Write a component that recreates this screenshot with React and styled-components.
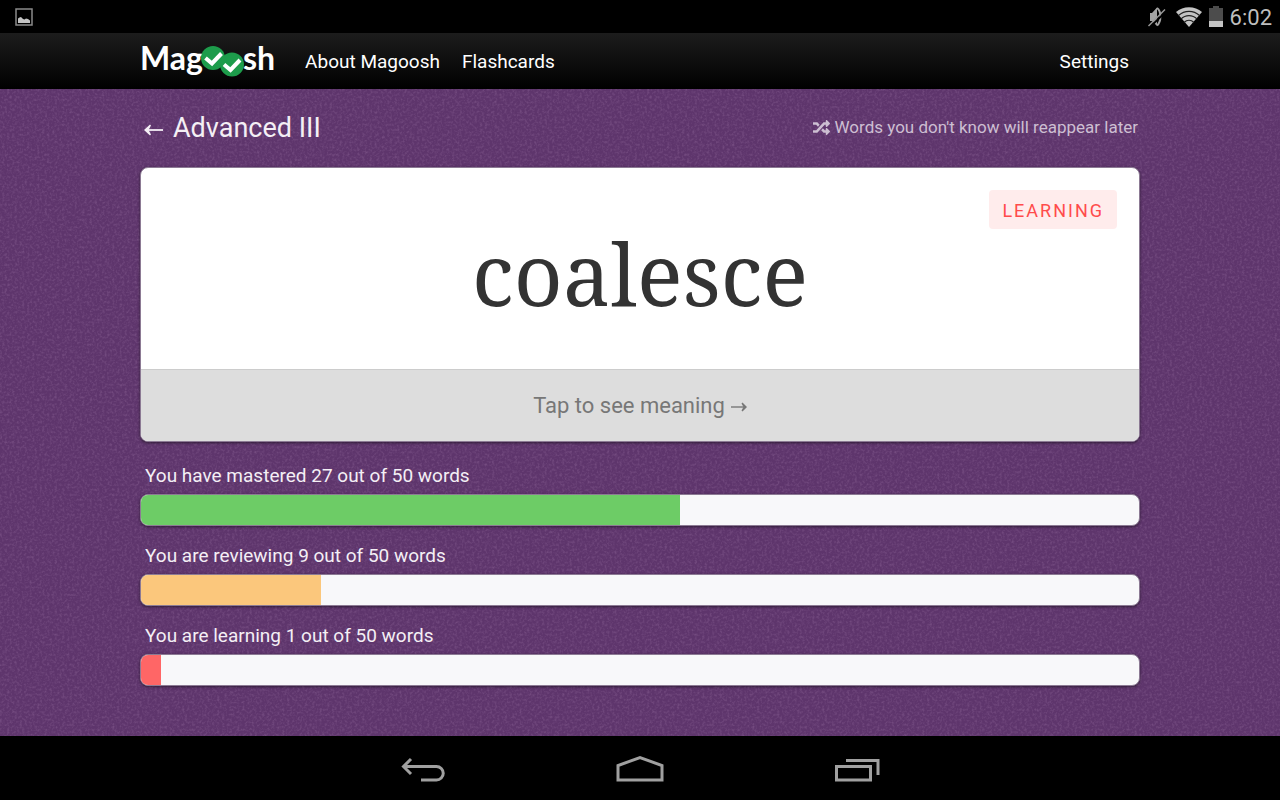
import React from 'react';
import styled, { createGlobalStyle } from 'styled-components';
import { FaRandom } from 'react-icons/fa';

const TOTAL_WORDS = 50;

const PROGRESS = [
  { id: 'mastered', label: 'You have mastered', count: 27, color: '#6dcc66' },
  { id: 'reviewing', label: 'You are reviewing', count: 9, color: '#fbc77c' },
  { id: 'learning', label: 'You are learning', count: 1, color: '#ff6666' },
];

const StatusBar = () => (
  <StatusBarWrapper>
    <svg width='18' height='18' viewBox='0 0 18 18'>
      <rect x='1' y='1' width='16' height='16' fill='none' stroke='#8a8a8a' strokeWidth='1.5' />
      <path d='M3 15V10.500L4.500 9.500L6 9L8 11L9.500 11.500L11 10.500L13 11L15 12.500V15Z' fill='#c4c4c4' />
    </svg>
    <div className='statusRight'>
      <svg width='20' height='22' viewBox='0 0 20 22'>
        <path d='M3 7H5L10 1.500V20L5 15H3Z' fill='#a4a4a4' />
        <path d='M10 2C14.500 5 14.500 16 10 19.500' fill='none' stroke='#a4a4a4' strokeWidth='2' />
        <path d='M2.500 21.500L19.500 5' stroke='#000' strokeWidth='2' />
        <path d='M1.500 20L18 3.500' stroke='#9a9a9a' strokeWidth='1.500' />
      </svg>
      <svg className='wifi' width='26' height='20' viewBox='0 0 26 20'>
        <path d='M13 20L0 5C7 -1.500 19 -1.500 26 5Z' fill='#c4c4c4' />
        <path
          d='M2.500 8.500C8.500 3 17.500 3 23.500 8.500M5 12C9.500 7.500 16.500 7.500 21 12M8 15.500C11 12.500 15 12.500 18 15.500'
          fill='none'
          stroke='#222'
          strokeWidth='1.200'
        />
      </svg>
      <svg className='battery' width='14' height='21' viewBox='0 0 14 21'>
        <path d='M0 2H4V0H10V2H14V21H0Z' fill='#4c4c4c' />
        <rect y='15' width='14' height='6' fill='#c4c4c4' />
      </svg>
      <time>6:02</time>
    </div>
  </StatusBarWrapper>
);

const Logo = () => (
  <LogoLink href='#home' aria-label='Magoosh'>
    <span>Mag</span>
    <svg width='40' height='34' viewBox='0 0 40 34'>
      <circle cx='10' cy='14' r='12' fill='#1d9c4b' />
      <circle cx='29' cy='20.500' r='12' fill='#1d9c4b' />
      <path
        d='M2.500 14L9 19.500L18.500 9.500M21 20.500L27.500 26L37 16'
        fill='none'
        stroke='#fff'
        strokeWidth='4'
      />
    </svg>
    <span>sh</span>
  </LogoLink>
);

const ProgressRow = ({ id, label, count, color }) => (
  <ProgressItem>
    <p id={id}>
      {label} {count} out of {TOTAL_WORDS} words
    </p>
    <Track
      role='progressbar'
      aria-labelledby={id}
      aria-valuenow={count}
      aria-valuemin={0}
      aria-valuemax={TOTAL_WORDS}
    >
      <Fill $color={color} style={{ width: `${(count / TOTAL_WORDS) * 100}%` }} />
    </Track>
  </ProgressItem>
);

const SystemNav = () => (
  <SystemNavWrapper>
    <button aria-label='Back'>
      <svg width='48' height='32' viewBox='0 0 48 32'>
        <path d='M12 4L4.500 11.500L12 19M4.500 11.500H37.500A6.500 6.500 0 0 1 37.500 25H22' />
      </svg>
    </button>
    <button aria-label='Home'>
      <svg width='48' height='32' viewBox='0 0 48 32'>
        <path d='M2 25V10.500L24 2.500L46 10.500V25Z' />
      </svg>
    </button>
    <button aria-label='Recent apps'>
      <svg width='48' height='32' viewBox='0 0 48 32'>
        <path d='M3.500 11.500H37.500V25H3.500ZM13 5.500H45V20' />
      </svg>
    </button>
  </SystemNavWrapper>
);

const App = () => {
  return (
    <Page>
      <GlobalStyle />
      <StatusBar />
      <NavBar>
        <Container className='navInner'>
          <Logo />
          <NavLink href='#about'>About Magoosh</NavLink>
          <NavLink href='#flashcards'>Flashcards</NavLink>
          <NavLink href='#settings' $last>
            Settings
          </NavLink>
        </Container>
      </NavBar>
      <Main>
        <Grain aria-hidden='true'>
          <filter
            id='grain'
            x='0'
            y='0'
            width='100%'
            height='100%'
            colorInterpolationFilters='sRGB'
          >
            <feTurbulence type='fractalNoise' baseFrequency='0.4' numOctaves='2' seed='4' />
            <feColorMatrix values='0 0 0 0 1  0 0 0 0 0.85  0 0 0 0 1  0.3 0 0 0 -0.13' />
          </filter>
          <rect width='100%' height='100%' filter='url(#grain)' />
        </Grain>
        <Container className='content'>
          <DeckHeader>
            <a href='#decks' aria-label='Back to decks'>
              <svg width='20' height='18' viewBox='0 0 20 18'>
                <path d='M20 11H3' stroke='#f4eff5' strokeWidth='1.800' />
                <path d='M1 11L7 5.500L8 6.500L5.500 11L8 15.500L7 16.500Z' fill='#f4eff5' />
              </svg>
            </a>
            <h1>Advanced III</h1>
            <p>
              <FaRandom size={17} />
              Words you don't know will reappear later
            </p>
          </DeckHeader>
          <Card>
            <WordArea>
              <Badge>LEARNING</Badge>
              <h2>coalesce</h2>
            </WordArea>
            <MeaningButton>
              Tap to see meaning
              <svg width='16' height='14' viewBox='0 0 16 14'>
                <path d='M0 8H14' stroke='#777' strokeWidth='1.400' />
                <path d='M16 8L11.500 3.500L10.500 4.500L12.500 8L10.500 11.500L11.500 12.500Z' fill='#777' />
              </svg>
            </MeaningButton>
          </Card>
          <ProgressList>
            {PROGRESS.map((item) => (
              <ProgressRow key={item.id} {...item} />
            ))}
          </ProgressList>
        </Container>
      </Main>
      <SystemNav />
    </Page>
  );
};

const GlobalStyle = createGlobalStyle`
  * {
    box-sizing: border-box;
  }
  body, h1, h2, p {
    margin: 0;
    font-weight: 400;
  }
  body {
    background: #000;
    font-family: Roboto, 'Liberation Sans', sans-serif;
  }
  a {
    color: inherit;
    text-decoration: none;
  }
  button {
    border: 0;
    padding: 0;
    font-family: inherit;
    cursor: pointer;
  }
  svg {
    display: block;
    flex-shrink: 0;
  }
`;

const Page = styled.div`
  display: flex;
  flex-direction: column;
  min-height: 100vh;
`;

const Container = styled.div`
  width: 100%;
  max-width: 1000px;
  margin: 0 auto;
`;

const StatusBarWrapper = styled.div`
  display: flex;
  justify-content: space-between;
  align-items: center;
  height: 33px;
  padding: 0 8px 0 15px;
  background: #000;
  .statusRight {
    display: flex;
    align-items: center;
  }
  .wifi {
    margin: 0 7px 0 9px;
  }
  .battery {
    margin-right: 7px;
  }
  time {
    padding-top: 2px;
    color: #bebebe;
    font-size: 22px;
    line-height: 30px;
  }
`;

const NavBar = styled.nav`
  height: 56px;
  background: linear-gradient(#1c1c1c, #000);
  .navInner {
    display: flex;
    align-items: center;
    height: 100%;
    padding-right: 11px;
  }
`;

const LogoLink = styled.a`
  display: flex;
  align-items: center;
  margin-right: 30px;
  color: #fff;
  font-family: Lato, 'Liberation Sans', sans-serif;
  font-size: 32px;
  font-weight: 700;
  line-height: 32px;
  span {
    padding-bottom: 6px;
  }
  svg {
    overflow: visible;
  }
`;

const NavLink = styled.a`
  margin-right: ${({ $last }) => ($last ? 0 : 22)}px;
  margin-left: ${({ $last }) => ($last ? 'auto' : 0)};
  padding-top: 2px;
  color: #fff;
  font-size: 19px;
  line-height: 24px;
`;

const Main = styled.main`
  position: relative;
  flex: 1;
  padding-bottom: 48px;
  background: #5e356c;
  .content {
    position: relative;
  }
`;

const Grain = styled.svg`
  position: absolute;
  inset: 0;
  width: 100%;
  height: 100%;
`;

const DeckHeader = styled.header`
  display: flex;
  align-items: center;
  gap: 10px;
  height: 78px;
  padding: 0 2px 0 3px;
  color: #f4eff5;
  h1 {
    font-size: 27px;
    line-height: 32px;
  }
  p {
    display: flex;
    align-items: center;
    gap: 5px;
    margin-left: auto;
    padding-bottom: 2px;
    color: #cdbfd2;
    font-size: 17px;
    line-height: 24px;
  }
`;

const Card = styled.section`
  overflow: hidden;
  border: 1px solid #8c7a94;
  border-radius: 8px;
  background: #fff;
  box-shadow: 0 1px 3px rgba(0, 0, 0, 0.5);
`;

const WordArea = styled.div`
  position: relative;
  padding: 45px 24px 36px;
  text-align: center;
  h2 {
    color: #333;
    font-family: 'Droid Serif', 'Noto Serif', 'DejaVu Serif Condensed', 'DejaVu Serif', serif;
    font-size: 85px;
    line-height: 120px;
  }
`;

const Badge = styled.span`
  position: absolute;
  top: 22px;
  right: 22px;
  padding: 8px 13px 6px;
  border-radius: 4px;
  background: #ffecec;
  color: #ff4b4b;
  font-size: 18px;
  letter-spacing: 2px;
  line-height: 25px;
`;

const MeaningButton = styled.button`
  display: flex;
  justify-content: center;
  align-items: center;
  gap: 6px;
  width: 100%;
  height: 72px;
  border-top: 1px solid #ccc;
  background: #ddd;
  color: #777;
  font-size: 22px;
  line-height: 28px;
`;

const ProgressList = styled.div`
  display: grid;
  gap: 18px;
  margin-top: 22px;
`;

const ProgressItem = styled.div`
  p {
    margin-bottom: 6px;
    padding-left: 5px;
    color: #f4eff5;
    font-size: 19px;
    line-height: 24px;
  }
`;

const Track = styled.div`
  height: 32px;
  overflow: hidden;
  border: 1px solid #8c7a94;
  border-radius: 8px;
  background: #f8f8fa;
  box-shadow: 0 1px 3px rgba(0, 0, 0, 0.5);
`;

const Fill = styled.div`
  height: 100%;
  background: ${({ $color }) => $color};
`;

const SystemNavWrapper = styled.div`
  display: flex;
  justify-content: center;
  align-items: center;
  gap: 169px;
  height: 64px;
  padding-top: 5px;
  background: #000;
  button {
    background: none;
  }
  path {
    fill: none;
    stroke: #a0a0a0;
    stroke-width: 3;
  }
`;

export default App;
